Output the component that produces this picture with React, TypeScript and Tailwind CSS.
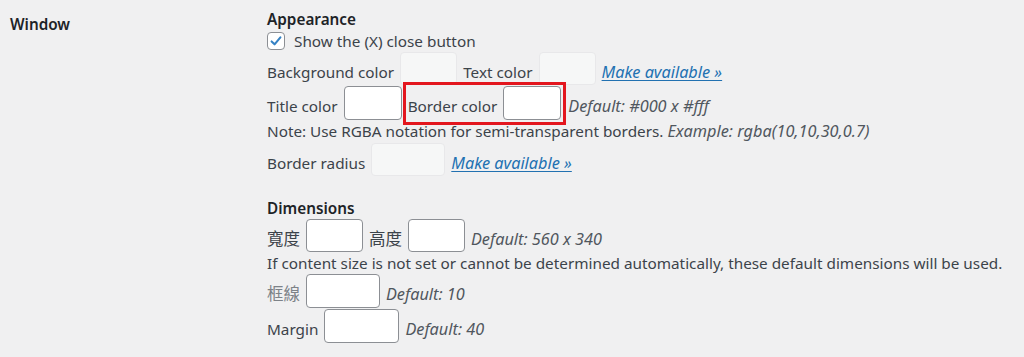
import React from "react";

const Enabled = ({ w, h }: { w: string; h: string }) => (
  <span className={`${w} ${h} shrink-0 block rounded-[4px] border border-[#8c8f94] bg-white`} />
);

const Disabled = ({ w, h }: { w: string; h: string }) => (
  <span className={`${w} ${h} shrink-0 block rounded-[4px] border border-[#e8e8ea] bg-[#f6f7f7]`} />
);

const Link = ({ children }: { children: React.ReactNode }) => (
  <a href="#" className="italic text-[16.3px] underline text-[#2271b1] leading-[22px] pt-[6px] underline-offset-[2px] whitespace-nowrap">
    {children}
  </a>
);

export default function App() {
  const label = "leading-[22px] pt-[6px] whitespace-nowrap";
  const note = "italic text-[16.3px] text-[#50575e] leading-[22px] pt-[6px] whitespace-nowrap";
  const cjk = "text-[16.5px] leading-[22px] pt-[6px] whitespace-nowrap";
  return (
    <div className="w-[1024px] h-[357px] bg-[#f0f0f1] text-[#3c434a] font-['Noto_Sans','Noto_Sans_CJK_TC',sans-serif] text-[15.3px] flex overflow-hidden">
      <div className="w-[267px] shrink-0 pl-[10px] pt-[14px]">
        <div className="font-semibold leading-[21px] h-[21px] text-[#1d2327]">Window</div>
      </div>
      <div className="flex flex-col pt-[9px]">
        <div className="font-semibold h-[21px] leading-[21px] text-[#1d2327]">Appearance</div>
        <div className="h-[22px] flex items-center gap-[9px]">
          <span className="w-[18px] h-[18px] rounded-[4px] border border-[#8c8f94] bg-white flex items-center justify-center">
            <svg width="16" height="16" viewBox="0 0 20 20">
              <path d="M4.5 10.5 L8.2 14.2 L15.5 5.5" fill="none" stroke="#3582c4" strokeWidth="2.6" strokeLinecap="round" strokeLinejoin="round" />
            </svg>
          </span>
          <span className="leading-[22px] whitespace-nowrap">Show the (X) close button</span>
        </div>
        <div className="h-[33px] flex items-center gap-[6px]">
          <span className={label}>Background color</span>
          <Disabled w="w-[57px]" h="h-[33px]" />
          <span className={label}>Text color</span>
          <Disabled w="w-[57px]" h="h-[33px]" />
          <Link>Make available »</Link>
        </div>
        <div className="h-[34px] mt-[1px] flex items-center gap-[6px]">
          <span className={label}>Title color</span>
          <Enabled w="w-[58px]" h="h-[34px]" />
          <span className="relative flex items-center gap-[6px]">
            <span className="absolute -left-[5px] -right-[5px] -top-[4px] -bottom-[5px] border-[3px] border-[#e3161e] pointer-events-none" />
            <span className={label}>Border color</span>
            <Enabled w="w-[58px]" h="h-[34px]" />
          </span>
          <span className={`${note} ml-[1px]`}>Default: #000 x #fff</span>
        </div>
        <div className="h-[23px] leading-[23px] whitespace-nowrap">
          Note: Use RGBA notation for semi-transparent borders.{" "}
          <em className="text-[16.3px] text-[#50575e]">Example: rgba(10,10,30,0.7)</em>
        </div>
        <div className="h-[33px] flex items-center gap-[6px]">
          <span className={label}>Border radius</span>
          <Disabled w="w-[74px]" h="h-[33px]" />
          <Link>Make available »</Link>
        </div>

        <div className="font-semibold h-[21px] leading-[21px] mt-[22px] text-[#1d2327]">Dimensions</div>
        <div className="h-[33px] flex items-center gap-[6px]">
          <span className={cjk}>寬度</span>
          <Enabled w="w-[57px]" h="h-[33px]" />
          <span className={cjk}>高度</span>
          <Enabled w="w-[57px]" h="h-[33px]" />
          <span className={note}>Default: 560 x 340</span>
        </div>
        <div className="h-[22px] leading-[22px] whitespace-nowrap">
          If content size is not set or cannot be determined automatically, these default dimensions will be used.
        </div>
        <div className="h-[34px] flex items-center gap-[6px]">
          <span className={`${cjk} text-[#7d8288]`}>框線</span>
          <Enabled w="w-[74px]" h="h-[34px]" />
          <span className={note}>Default: 10</span>
        </div>
        <div className="h-[34px] mt-[1px] flex items-center gap-[6px]">
          <span className={label}>Margin</span>
          <Enabled w="w-[75px]" h="h-[34px]" />
          <span className={note}>Default: 40</span>
        </div>
      </div>
    </div>
  );
}
